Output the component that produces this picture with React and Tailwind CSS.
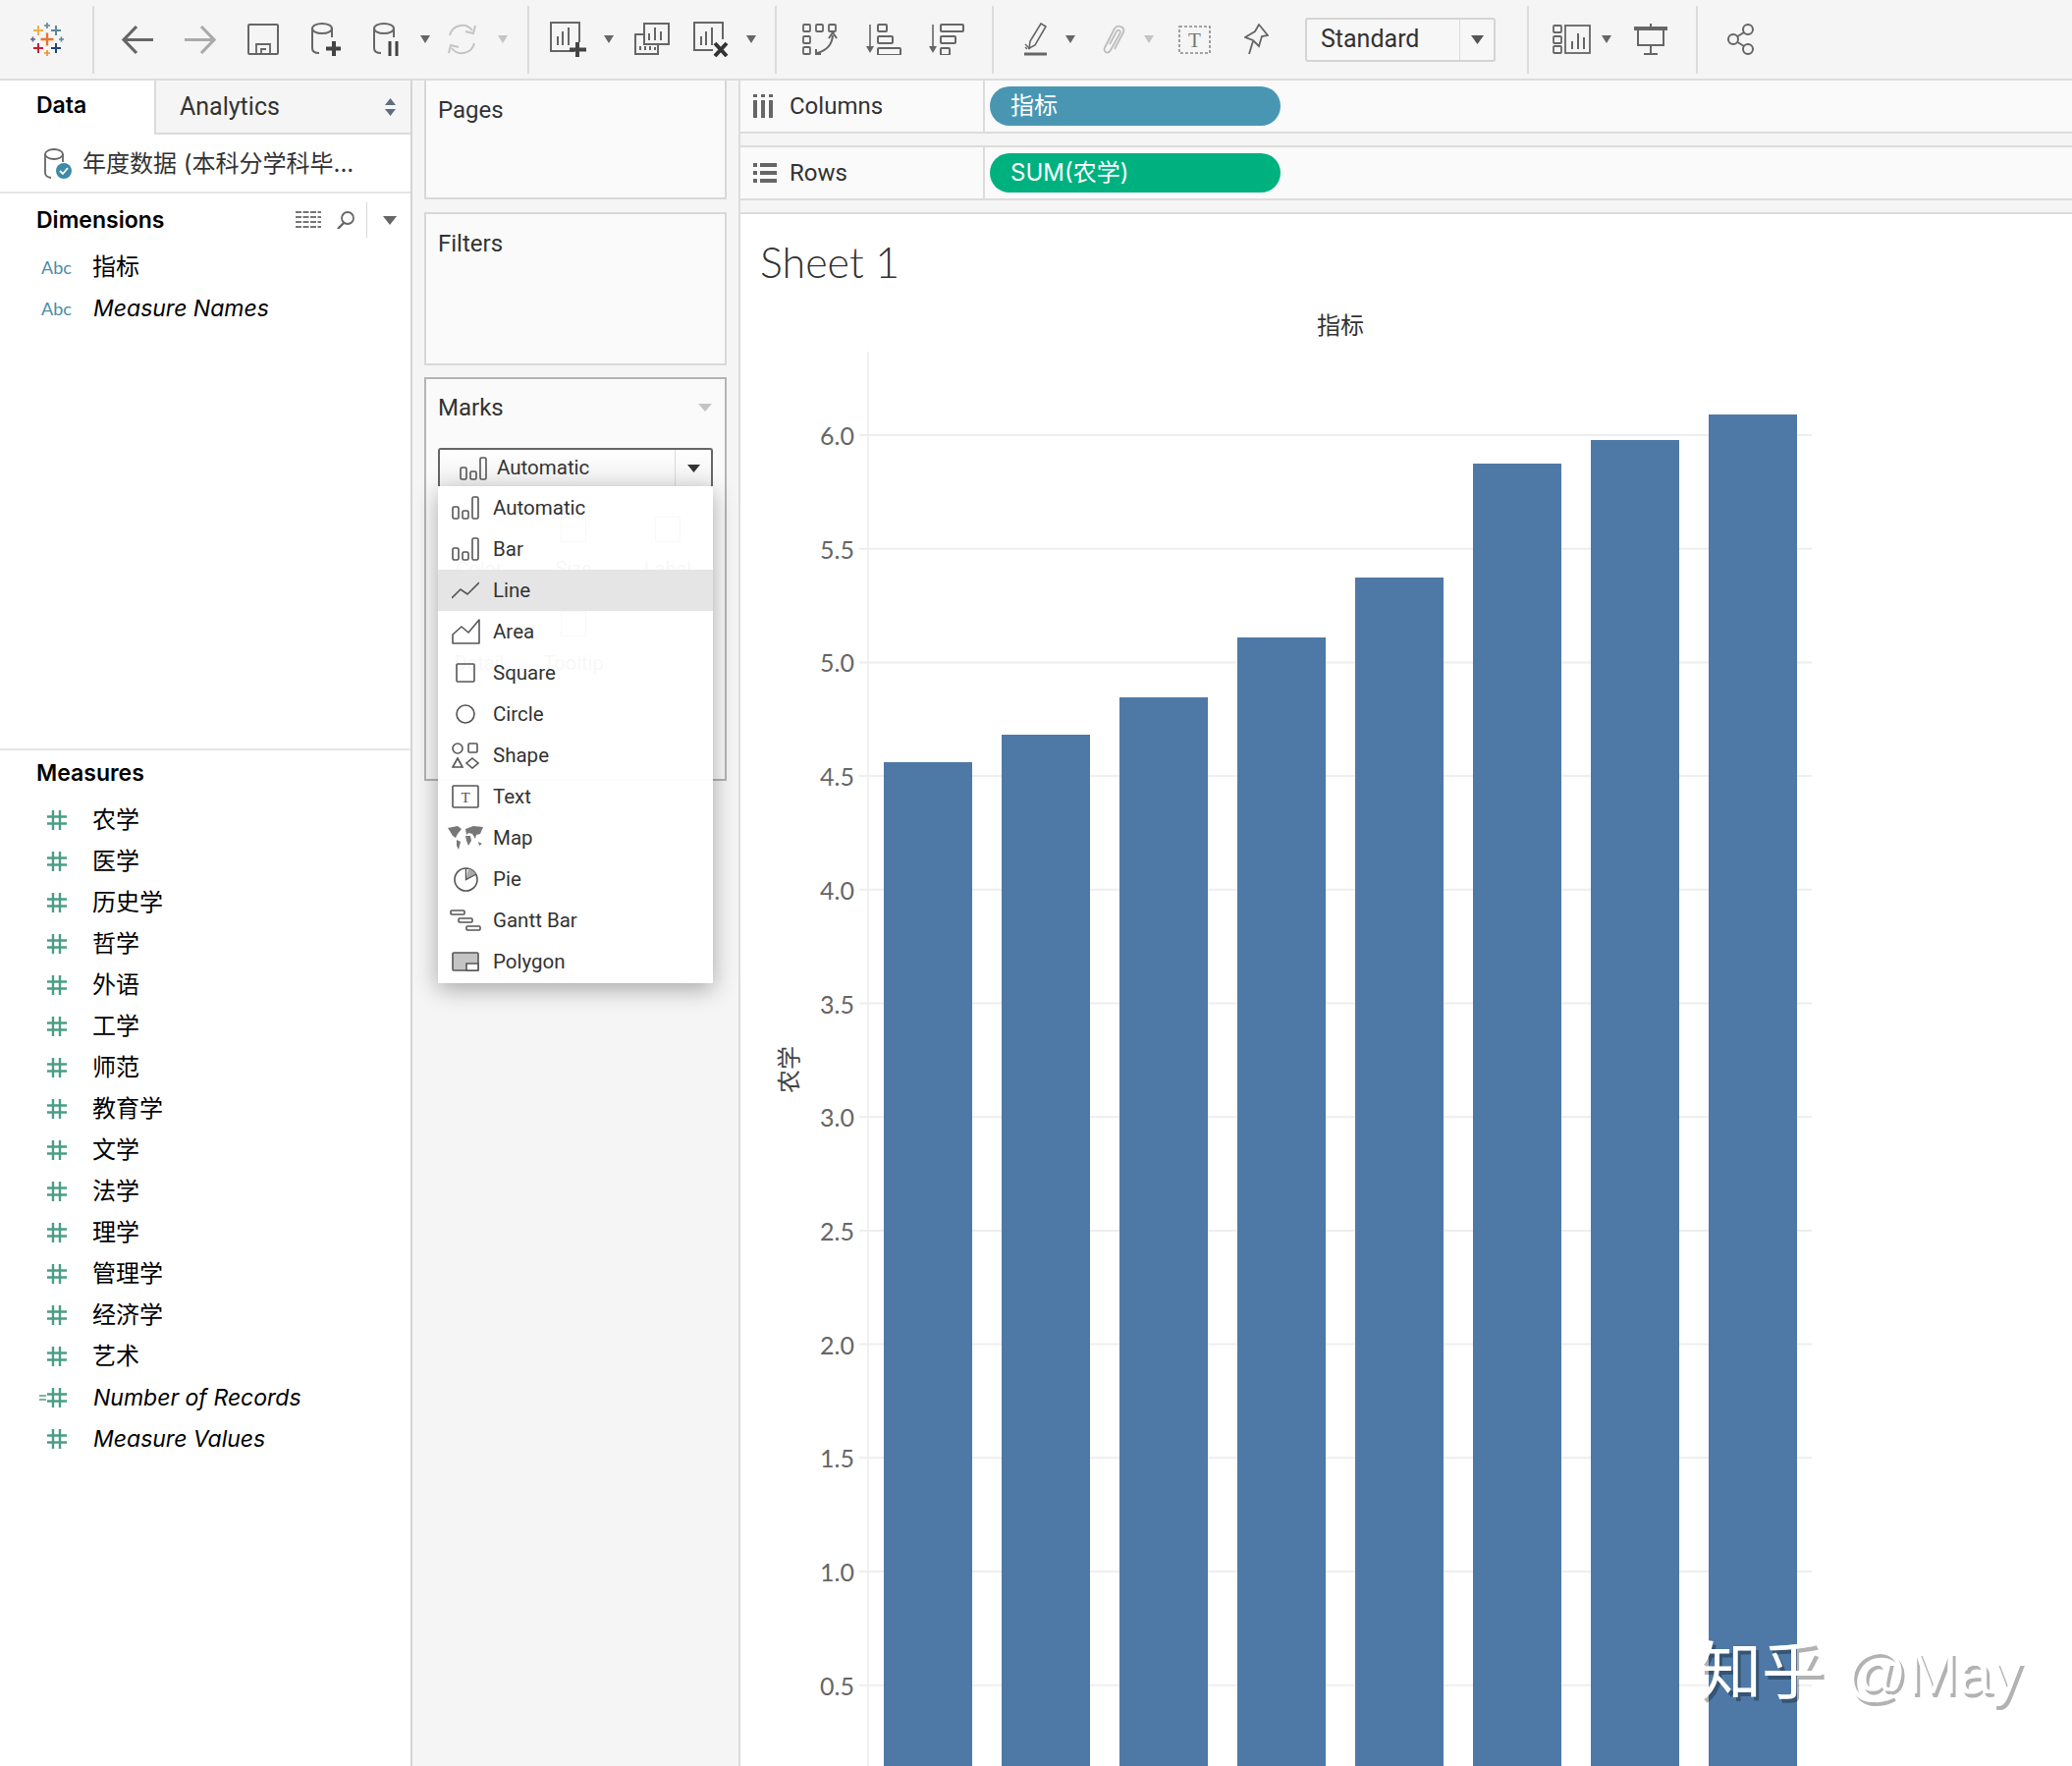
import React from 'react';

const GRAY = '#666';

const Caret = ({ light, className = '' }) => (
  <svg width="10" height="8" viewBox="0 0 10 8" className={`shrink-0 ${className}`}>
    <path d="M0 0H10L5 8Z" fill={light ? '#c4c4c4' : '#666'} />
  </svg>
);

const Sep = ({ className = '' }) => <div className={`w-[2px] h-[69px] shrink-0 bg-[#dcdcdc] ${className}`} />;

const Logo = ({ className }) => {
  const crosses = [
    [17, 17, 6.5, 2.4, '#e8762d'],
    [8, 8, 5, 2, '#eeb04a'],
    [26, 8, 5, 2, '#5b879b'],
    [8, 26, 5, 2, '#c72035'],
    [26, 26, 5, 2, '#1f447e'],
    [17, 3, 3, 1.6, '#5b879b'],
    [2.5, 17, 2.5, 1.6, '#5b6591'],
    [31.5, 17, 2.5, 1.6, '#5b879b'],
    [17, 31, 3, 1.6, '#eb912b'],
  ];
  return (
    <svg width="34" height="34" viewBox="0 0 34 34" className={className}>
      {crosses.map(([x, y, r, w, c], i) => (
        <path key={i} d={`M${x - r} ${y}H${x + r}M${x} ${y - r}V${y + r}`} stroke={c} strokeWidth={w} />
      ))}
    </svg>
  );
};

const ArrowIcon = ({ flip, color, className }) => (
  <svg width="33" height="31" viewBox="0 0 33 31" fill="none" stroke={color} strokeWidth="3.2" className={className} style={flip ? { transform: 'scaleX(-1)' } : undefined}>
    <path d="M33 15.5H4M16 2L3 15.5L16 29" />
  </svg>
);

const SaveIcon = ({ className }) => (
  <svg width="32" height="32" viewBox="0 0 32 32" fill="none" stroke={GRAY} strokeWidth="2" className={className}>
    <rect x="1" y="1" width="30" height="30" rx="1" />
    <path d="M9 31V21H23V31M14 31V26H19" strokeWidth="1.8" />
  </svg>
);

const Cylinder = ({ children, w, className }) => (
  <svg width={w} height="34" viewBox={`0 0 ${w} 34`} fill="none" stroke={GRAY} strokeWidth="2" className={className}>
    <ellipse cx="11" cy="6" rx="10" ry="5" />
    <path d="M1 6V26Q1 31 8 31M21 6V15" />
    {children}
  </svg>
);

const RefreshIcon = ({ className }) => (
  <svg width="33" height="32" viewBox="0 0 33 32" fill="none" stroke="#c4c4c4" strokeWidth="2" className={className}>
    <path d="M4 12A13 13 0 0 1 27 7" />
    <path d="M29 20A13 13 0 0 1 6 25" />
    <path d="M30 2L28 10L20 8M3 30L5 22L13 24" />
  </svg>
);

const SheetBars = ({ x = 0, y = 0 }) => (
  <path d={`M${x + 8} ${y + 24}V${y + 15}M${x + 13} ${y + 24}V${y + 10}M${x + 19} ${y + 24}V${y + 6}`} strokeWidth="2" />
);

const NewSheetIcon = ({ className }) => (
  <svg width="37" height="37" viewBox="0 0 37 37" fill="none" stroke={GRAY} strokeWidth="2" className={className}>
    <path d="M25 30H1V1H30V21" />
    <SheetBars />
    <path d="M28 21V36M20 28.5H37" stroke="#444" strokeWidth="4" />
  </svg>
);

const DupSheetIcon = ({ className }) => (
  <svg width="36" height="34" viewBox="0 0 36 34" fill="none" stroke={GRAY} strokeWidth="2" className={className}>
    <rect x="10" y="1" width="25" height="21" />
    <path d="M15 18V11M21 18V5M27 18V9" />
    <path d="M10 12H1V32H24V22" />
    <path d="M6 28V24M11 28V24M16 28V24M21 28V25" />
  </svg>
);

const ClearSheetIcon = ({ className }) => (
  <svg width="36" height="36" viewBox="0 0 36 36" fill="none" stroke={GRAY} strokeWidth="2" className={className}>
    <path d="M20 29H1V1H30V18" />
    <SheetBars />
    <path d="M22 22L34 35M34 22L22 35" stroke="#333" strokeWidth="4" />
  </svg>
);

const SwapIcon = ({ className }) => (
  <svg width="36" height="32" viewBox="0 0 36 32" fill="none" stroke={GRAY} strokeWidth="1.8" className={className}>
    <rect x="1" y="1" width="7" height="7" rx="1" />
    <rect x="14" y="1" width="7" height="7" rx="1" />
    <rect x="27" y="1" width="7" height="7" rx="1" />
    <rect x="1" y="13" width="7" height="7" rx="1" />
    <rect x="1" y="24" width="7" height="7" rx="1" />
    <path d="M15 30Q30 26 31 12" strokeWidth="2" />
    <path d="M27 15L31 9L35 15M14 26L14 31L19 31" strokeWidth="2" />
  </svg>
);

const SortIcon = ({ desc, className }) => {
  const bars = desc ? [[12, 1, 23], [12, 13, 15], [12, 25, 9]] : [[12, 1, 9], [12, 13, 15], [12, 25, 23]];
  return (
    <svg width="36" height="32" viewBox="0 0 36 32" fill="none" stroke={GRAY} strokeWidth="2" className={className}>
      <path d="M4 1V27" strokeWidth="1.6" />
      <path d="M0 23H8L4 30Z" fill={GRAY} stroke="none" />
      {bars.map(([x, y, w], i) => (
        <rect key={i} x={x} y={y} width={w} height="7" rx="1" />
      ))}
    </svg>
  );
};

const HighlightIcon = ({ className }) => (
  <svg width="24" height="34" viewBox="0 0 24 34" fill="none" stroke={GRAY} strokeWidth="1.6" className={className}>
    <path d="M17 1L22 4L11 23L5 26L6 19Z" />
    <path d="M1 25L3 27M1 22L6 27" strokeWidth="1.4" />
    <path d="M0 32H23" strokeWidth="3" />
  </svg>
);

const ClipIcon = ({ className }) => (
  <svg width="27" height="31" viewBox="0 0 27 31" fill="none" stroke="#bdbdbd" strokeWidth="1.8" className={className}>
    <path d="M10 20L17 7C18.5 4.5 22 6 20.5 9L11 26C8.5 30.5 3 28 5 23.5L15 4C18 -0.5 26 2 24 8L15 25" />
  </svg>
);

const TextBoxIcon = ({ className }) => (
  <svg width="33" height="29" viewBox="0 0 33 29" fill="none" className={className}>
    <rect x="1" y="1" width="31" height="27" stroke="#888" strokeWidth="1.6" strokeDasharray="3 2" />
    <text x="16.5" y="22" fontSize="21" fontFamily="Liberation Serif" fill="#777" textAnchor="middle">T</text>
  </svg>
);

const PinIcon = ({ className }) => (
  <svg width="25" height="32" viewBox="0 0 25 32" fill="none" stroke={GRAY} strokeWidth="1.8" className={className}>
    <path d="M15 1L24 12L18 13L15 23L9 17L1 14L11 8Z" />
    <path d="M9 18L5 31" />
  </svg>
);

const ShowMeIcon = ({ className }) => (
  <svg width="39" height="30" viewBox="0 0 39 30" fill="none" stroke={GRAY} strokeWidth="1.8" className={className}>
    <rect x="1" y="1" width="8" height="7" rx="1" />
    <rect x="1" y="12" width="8" height="7" rx="1" />
    <rect x="1" y="22" width="8" height="7" rx="1" />
    <rect x="13" y="1" width="25" height="28" />
    <path d="M20 25V17M26 25V9M32 25V13" strokeWidth="2" />
  </svg>
);

const PresentIcon = ({ className }) => (
  <svg width="34" height="32" viewBox="0 0 34 32" fill="none" stroke={GRAY} strokeWidth="2" className={className}>
    <path d="M0 5H34" strokeWidth="4" />
    <path d="M17 0V3M4 7V22H30V7M17 22V31M10 31H24" />
  </svg>
);

const ShareIcon = ({ className }) => (
  <svg width="28" height="32" viewBox="0 0 28 32" fill="none" stroke={GRAY} strokeWidth="2" className={className}>
    <circle cx="21" cy="6" r="5" />
    <circle cx="6" cy="16" r="5" />
    <circle cx="21" cy="26" r="5" />
    <path d="M10.5 13L17 9M10.5 19L17 23" />
  </svg>
);

const Toolbar = () => (
  <div className="h-[82px] shrink-0 flex items-center bg-[#f5f5f5] border-b-2 border-[#dcdcdc]">
    <Logo className="ml-[31px] shrink-0" />
    <Sep className="ml-[29px]" />
    <ArrowIcon color="#666" className="ml-[27px] shrink-0" />
    <ArrowIcon flip color="#aaa" className="ml-[32px] shrink-0" />
    <SaveIcon className="ml-[31px] shrink-0" />
    <Cylinder w={30} className="ml-[33px] shrink-0">
      <path d="M23 19V34M15 26.5H30" stroke="#444" strokeWidth="4" />
    </Cylinder>
    <Cylinder w={26} className="ml-[33px] shrink-0">
      <path d="M17 19V34M24 19V34" stroke="#444" strokeWidth="3" />
    </Cylinder>
    <Caret className="ml-[22px]" />
    <RefreshIcon className="ml-[16px] shrink-0" />
    <Caret light className="ml-[20px]" />
    <Sep className="ml-[20px]" />
    <NewSheetIcon className="ml-[21px] shrink-0" />
    <Caret className="ml-[18px]" />
    <DupSheetIcon className="ml-[21px] shrink-0" />
    <ClearSheetIcon className="ml-[24px] shrink-0" />
    <Caret className="ml-[18px]" />
    <Sep className="ml-[19px]" />
    <SwapIcon className="ml-[26px] shrink-0" />
    <SortIcon className="ml-[29px] shrink-0" />
    <SortIcon desc className="ml-[28px] shrink-0" />
    <Sep className="ml-[28px]" />
    <HighlightIcon className="ml-[31px] shrink-0" />
    <Caret className="ml-[18px]" />
    <ClipIcon className="ml-[25px] shrink-0" />
    <Caret light className="ml-[18px]" />
    <TextBoxIcon className="ml-[25px] shrink-0" />
    <PinIcon className="ml-[34px] shrink-0" />
    <div className="ml-[37px] w-[194px] h-[45px] shrink-0 flex items-center border-2 border-[#d4d4d4] rounded-[3px] bg-[#f7f7f7]">
      <span className="flex-1 pl-[14px] text-[25px] text-[#333]">Standard</span>
      <div className="w-[35px] h-full flex items-center justify-center border-l border-[#dcdcdc]">
        <svg width="13" height="9" viewBox="0 0 13 9"><path d="M0 0H13L6.5 9Z" fill="#555" /></svg>
      </div>
    </div>
    <Sep className="ml-[32px]" />
    <ShowMeIcon className="ml-[24px] shrink-0" />
    <Caret className="ml-[11px]" />
    <PresentIcon className="ml-[23px] shrink-0" />
    <Sep className="ml-[29px]" />
    <ShareIcon className="ml-[30px] shrink-0" />
  </div>
);

const AbcIcon = () => <span className="ml-[2px] text-[18px] text-[#4a8ea8] font-['Lato',sans-serif]">Abc</span>;

const HashIcon = ({ calc }) => (
  <svg width="28" height="20" viewBox="0 0 28 20" fill="none" stroke="#4b9e85" strokeWidth="2.4">
    <path d="M14 0V20M21 0V20M8 6.5H28M8 13.5H28" />
    {calc && <path d="M0 8H7M0 12H7" strokeWidth="1.6" />}
  </svg>
);

const FieldRow = ({ icon, label, italic }) => (
  <div className="h-[42px] flex items-center pl-[40px]">
    <div className="w-[55px] flex items-center">{icon}</div>
    {italic ? (
      <span className="text-[23px] italic text-black">{label}</span>
    ) : (
      <span className="-ml-[1px] text-[24px] text-black">{label}</span>
    )}
  </div>
);

const measures = ['农学', '医学', '历史学', '哲学', '外语', '工学', '师范', '教育学', '文学', '法学', '理学', '管理学', '经济学', '艺术'];

const DataPane = () => (
  <div className="w-[420px] shrink-0 flex flex-col bg-white border-r-2 border-[#d4d4d4] font-['Inter','Noto_Sans_CJK_SC',sans-serif]">
    <div className="h-[55px] shrink-0 flex">
      <div className="w-[157px] pl-[37px] pb-[5px] flex items-center text-[23px] font-semibold text-black">Data</div>
      <div className="flex-1 flex items-center justify-between pl-[24px] pr-[15px] bg-[#f5f5f5] border-l-2 border-b-2 border-[#dcdcdc] font-['Roboto',sans-serif] text-[25px] text-[#333]">
        <span>Analytics</span>
        <svg width="11" height="18" viewBox="0 0 11 18"><path d="M0 7L5.5 0L11 7ZM0 11H11L5.5 18Z" fill="#5f6f80" /></svg>
      </div>
    </div>
    <div className="h-[60px] shrink-0 flex items-center pl-[45px] border-b-2 border-[#e5e5e5]">
      <svg width="28" height="31" viewBox="0 0 28 31" fill="none" stroke={GRAY} strokeWidth="1.8" className="shrink-0">
        <ellipse cx="10" cy="6" rx="9" ry="5" />
        <path d="M1 6V25Q1 29 7 30M19 6V14" />
        <circle cx="20" cy="23" r="8" fill="#3f8aa6" stroke="none" />
        <path d="M16 23L19 26L24 20" stroke="#fff" strokeWidth="1.8" />
      </svg>
      <span className="ml-[11px] pt-[2px] text-[24px] text-[#333] whitespace-nowrap">年度数据 (本科分学科毕...</span>
    </div>
    <div className="h-[54px] shrink-0 flex items-center pl-[37px]">
      <span className="w-[264px] text-[23px] font-semibold text-black">Dimensions</span>
      <svg width="26" height="18" viewBox="0 0 26 18" stroke="#777" strokeWidth="2" strokeDasharray="6 1.5" className="shrink-0">
        <path d="M0 1H26M0 6H26M0 11H26M0 16H26" />
      </svg>
      <svg width="19" height="18" viewBox="0 0 19 18" fill="none" stroke="#666" strokeWidth="1.8" className="ml-[15px] shrink-0">
        <circle cx="12" cy="7" r="6" />
        <path d="M8 12L2 18" strokeWidth="2.4" />
      </svg>
      <div className="ml-[12px] w-[1px] h-[36px] bg-[#d8d8d8]" />
      <svg width="14" height="9" viewBox="0 0 14 9" className="ml-[16px] shrink-0"><path d="M0 0H14L7 9Z" fill="#666" /></svg>
    </div>
    <FieldRow icon={<AbcIcon />} label="指标" />
    <FieldRow icon={<AbcIcon />} label="Measure Names" italic />
    <div className="mt-[427px] h-[47px] shrink-0 pt-[1px] flex items-center pl-[37px] border-t-2 border-[#e5e5e5] text-[23px] font-semibold text-black">Measures</div>
    <div className="pt-[5px]">
      {measures.map((m) => (
        <FieldRow key={m} icon={<HashIcon />} label={m} />
      ))}
      <FieldRow icon={<HashIcon calc />} label="Number of Records" italic />
      <FieldRow icon={<HashIcon />} label="Measure Values" italic />
    </div>
  </div>
);

const BarsIcon = () => (
  <svg width="28" height="24" viewBox="0 0 28 24" fill="none" stroke="#555" strokeWidth="1.6">
    <rect x="1" y="11" width="6" height="12" rx="1.5" />
    <rect x="11" y="15" width="6" height="8" rx="1.5" />
    <rect x="21" y="1" width="6" height="22" rx="1.5" />
  </svg>
);

const markIcons = {
  Automatic: <BarsIcon />,
  Bar: <BarsIcon />,
  Line: (
    <svg width="28" height="18" viewBox="0 0 28 18" fill="none" stroke="#555" strokeWidth="1.6">
      <path d="M0 17L9 8L16 13L28 1" />
    </svg>
  ),
  Area: (
    <svg width="29" height="26" viewBox="0 0 29 26" fill="none" stroke="#555" strokeWidth="1.6">
      <path d="M1 25V16L10 8L17 14L28 1V25Z" strokeLinejoin="round" />
    </svg>
  ),
  Square: (
    <svg width="20" height="20" viewBox="0 0 20 20" fill="none" stroke="#555" strokeWidth="1.6">
      <rect x="1" y="1" width="18" height="18" rx="1" />
    </svg>
  ),
  Circle: (
    <svg width="20" height="20" viewBox="0 0 20 20" fill="none" stroke="#555" strokeWidth="1.6">
      <circle cx="10" cy="10" r="9" />
    </svg>
  ),
  Shape: (
    <svg width="28" height="27" viewBox="0 0 28 27" fill="none" stroke="#555" strokeWidth="1.6">
      <circle cx="6" cy="6" r="5" />
      <rect x="17" y="1" width="9" height="9" rx="1" />
      <path d="M1 25L6 16L11 25Z" />
      <path d="M21 16L27 21L21 26L15 21Z" />
    </svg>
  ),
  Text: (
    <svg width="28" height="24" viewBox="0 0 28 24" fill="none">
      <rect x="1" y="1" width="26" height="22" rx="1" stroke="#555" strokeWidth="1.6" />
      <text x="14" y="17.5" fontSize="15" fontFamily="Liberation Serif" fill="#555" textAnchor="middle">T</text>
    </svg>
  ),
  Map: (
    <svg width="36" height="25" viewBox="0 0 36 25" fill="#777">
      <path d="M0 2L10 0L14 3L10 8L8 12L5 10L2 5Z" />
      <path d="M9 14L13 16L11 24L9 20Z" />
      <path d="M18 3L26 0L36 1L33 8L29 9L28 13L25 8L21 7L19 9Z" />
      <path d="M18 10L23 10L24 15L21 20L19 15Z" />
      <path d="M31 16L35 18L32 20Z" />
    </svg>
  ),
  Pie: (
    <svg width="25" height="25" viewBox="0 0 25 25" fill="none" stroke="#555" strokeWidth="1.6">
      <circle cx="12.5" cy="12.5" r="11.5" />
      <path d="M12.5 12.5L15 1.5A11 11 0 0 1 22.5 7Z" fill="#aaa" stroke="none" />
      <path d="M12.5 1V12.5L23 7" strokeWidth="1.4" />
    </svg>
  ),
  'Gantt Bar': (
    <svg width="32" height="22" viewBox="0 0 32 22" fill="none" stroke="#555" strokeWidth="1.6">
      <rect x="1" y="1" width="14" height="4" rx="1" />
      <rect x="9" y="9" width="14" height="4" rx="1" />
      <rect x="17" y="17" width="14" height="4" rx="1" />
    </svg>
  ),
  Polygon: (
    <svg width="28" height="20" viewBox="0 0 28 20" stroke="#555" strokeWidth="1.6">
      <rect x="1" y="1" width="26" height="18" rx="1" fill="#c4c4c4" />
      <path d="M15 19V12H27V19Z" fill="#fff" />
    </svg>
  ),
};

const MarkMenu = () => (
  <div className="absolute left-[12px] top-[109px] w-[280px] py-[1px] bg-white/95 shadow-[0_6px_22px_rgba(0,0,0,0.32)] z-10">
    {Object.keys(markIcons).map((name) => (
      <div key={name} className={`h-[42px] flex items-center text-[20.5px] text-[#333] ${name === 'Line' ? 'bg-[#e5e5e5]' : ''}`}>
        <div className="w-[56px] shrink-0 flex items-center justify-center">{markIcons[name]}</div>
        <span>{name}</span>
      </div>
    ))}
  </div>
);

const MarkCell = ({ label, box }) => (
  <div className="w-[96px] flex flex-col items-center">
    <div className={`h-[26px] w-[26px] ${box ? 'border border-[#777]' : ''}`} />
    <span className="mt-[12px] text-[20px] text-[#666]">{label}</span>
  </div>
);

const ShelfCards = () => (
  <div className="w-[332px] shrink-0 pl-[12px] pr-[12px] flex flex-col bg-[#f5f5f5]">
    <div className="h-[121px] shrink-0 pl-[12px] pt-[16px] bg-[#fafafa] border-2 border-t-0 border-[#d8d8d8] text-[24px] text-[#333] leading-[28px]">Pages</div>
    <div className="mt-[13px] h-[156px] shrink-0 pl-[12px] pt-[16px] bg-[#fafafa] border-2 border-[#d8d8d8] text-[24px] text-[#333] leading-[28px]">Filters</div>
    <div className="relative mt-[12px] h-[411px] shrink-0 bg-[#fafafa] border-2 border-[#b4b4b4]">
      <div className="h-[58px] flex items-center justify-between pl-[12px] pr-[13px] text-[24px] text-[#333]">
        <span>Marks</span>
        <svg width="14" height="8" viewBox="0 0 14 8"><path d="M0 0H14L7 8Z" fill="#c4c4c4" /></svg>
      </div>
      <div className="ml-[12px] mt-[12px] w-[280px] h-[41px] pb-[2px] flex items-center border-2 border-b-0 border-[#666] rounded-t-[3px] bg-gradient-to-b from-white to-[#f0f0f0]">
        <div className="ml-[20px] w-[38px] shrink-0"><BarsIcon /></div>
        <span className="flex-1 text-[20.5px] text-[#333]">Automatic</span>
        <div className="w-[37px] h-full flex items-center justify-center border-l border-[#d8d8d8]">
          <svg width="13" height="8" viewBox="0 0 13 8"><path d="M0 0H13L6.5 8Z" fill="#333" /></svg>
        </div>
      </div>
      <div className="ml-[6px] mt-[29px] flex">
        <MarkCell label="Color" />
        <MarkCell label="Size" box />
        <MarkCell label="Label" box />
      </div>
      <div className="ml-[6px] mt-[28px] flex">
        <MarkCell label="Detail" />
        <MarkCell label="Tooltip" box />
      </div>
      <MarkMenu />
    </div>
  </div>
);

const ColumnsIcon = () => (
  <svg width="21" height="24" viewBox="0 0 21 24" fill="#666" className="shrink-0">
    <rect x="0" y="0" width="4" height="3" />
    <rect x="8" y="0" width="4" height="3" />
    <rect x="16" y="0" width="4" height="3" />
    <rect x="0" y="6" width="4" height="18" />
    <rect x="8" y="6" width="4" height="18" />
    <rect x="16" y="6" width="4" height="18" />
  </svg>
);

const RowsIcon = () => (
  <svg width="24" height="20" viewBox="0 0 24 20" fill="#666" className="shrink-0">
    <rect x="0" y="0" width="4" height="4" />
    <rect x="0" y="8" width="4" height="4" />
    <rect x="0" y="16" width="4" height="4" />
    <rect x="7" y="0" width="17" height="4" />
    <rect x="7" y="8" width="17" height="4" />
    <rect x="7" y="16" width="17" height="4" />
  </svg>
);

const Shelf = ({ icon, label, pill, color, className = '' }) => (
  <div className={`h-[54px] shrink-0 flex bg-[#fafafa] border-b-2 border-[#dcdcdc] ${className}`}>
    <div className="w-[249px] shrink-0 flex items-center pl-[13px] border-r-2 border-[#dcdcdc]">
      <div className="w-[37px]">{icon}</div>
      <span className="text-[24px] text-[#333]">{label}</span>
    </div>
    <div className="pl-[5px] flex items-center">
      <div className={`w-[296px] h-[40px] rounded-full flex items-center pl-[21px] text-[24px] text-white font-['Inter','Noto_Sans_CJK_SC',sans-serif] ${color}`}>{pill}</div>
    </div>
  </div>
);

const bars = [776, 748, 710, 649, 588, 472, 448, 422];
const ticks = ['6.0', '5.5', '5.0', '4.5', '4.0', '3.5', '3.0', '2.5', '2.0', '1.5', '1.0', '0.5'];

const Chart = () => (
  <svg viewBox="754 308 1356 1490" className="w-[1356px] h-[1490px] block shrink-0">
    <path d="M884 358V1798" stroke="#f0f0f0" strokeWidth="2" />
    {ticks.map((t, i) => {
      const y = 443 + i * 115.7;
      return (
        <g key={t}>
          <path d={`M875 ${y}H1845`} stroke="#eeeeee" strokeWidth="2" />
          <text x="870" y={y + 10} textAnchor="end" fontSize="25" fontFamily="Lato" fill="#666">{t}</text>
        </g>
      );
    })}
    {bars.map((top, i) => (
      <rect key={i} x={900 + i * 120} y={top} width="90" height={1798 - top} fill="#4e79a7" />
    ))}
    <text x="1365" y="340" textAnchor="middle" fontSize="24" fontFamily="Noto Sans CJK SC" fill="#333">指标</text>
    <text transform="translate(812 1089) rotate(-90)" textAnchor="middle" fontSize="24" fontFamily="Noto Sans CJK SC" fill="#444">农学</text>
  </svg>
);

const ViewPane = () => (
  <div className="flex-1 flex flex-col overflow-hidden bg-[#f5f5f5] border-l-2 border-[#dcdcdc]">
    <Shelf icon={<ColumnsIcon />} label="Columns" pill="指标" color="bg-[#4996b2]" />
    <Shelf icon={<RowsIcon />} label="Rows" pill="SUM(农学)" color="bg-[#00b180]" className="mt-[12px] border-t-2 h-[56px]" />
    <div className="mt-[12px] flex-1 flex flex-col bg-white border-t-2 border-[#dcdcdc]">
      <div className="h-[90px] pt-[8px] shrink-0 flex items-center pl-[20px] text-[43px] font-light text-[#333] font-['Lato',sans-serif]">Sheet 1</div>
      <Chart />
    </div>
  </div>
);

export default function App() {
  return (
    <div className="relative w-[2110px] h-[1798px] overflow-hidden flex flex-col bg-[#f5f5f5] font-['Roboto','Noto_Sans_CJK_SC',sans-serif]">
      <Toolbar />
      <div className="flex-1 min-h-0 flex">
        <DataPane />
        <ShelfCards />
        <ViewPane />
      </div>
      <div className="absolute left-[1730px] top-[1654px] flex items-baseline text-white [text-shadow:3px_4px_0_rgba(0,0,0,0.3)] font-['Liberation_Sans','Noto_Sans_CJK_SC',sans-serif]">
        <span className="text-[64px]">知乎</span>
        <span className="ml-[21px] text-[62px]">@May</span>
      </div>
    </div>
  );
}
